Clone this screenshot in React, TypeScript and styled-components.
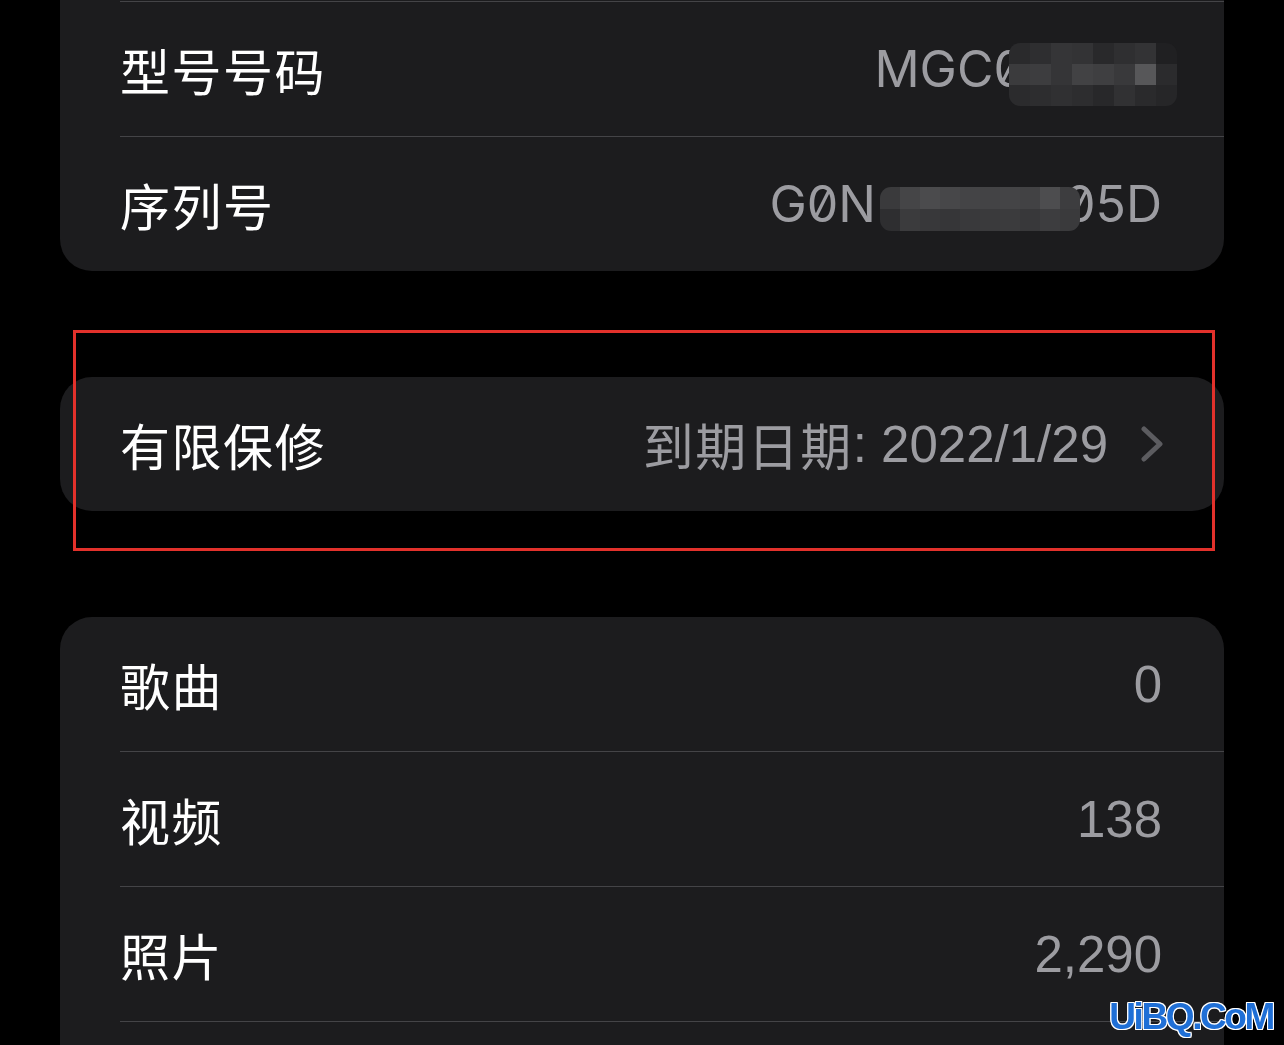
import React from "react";
import styled, { createGlobalStyle } from "styled-components";

const GlobalStyle = createGlobalStyle`
  html, body {
    margin: 0;
    padding: 0;
    background: #000;
    overflow: hidden;
  }
  body {
    font-family: "Liberation Sans", "Noto Sans CJK SC", sans-serif;
    -webkit-font-smoothing: antialiased;
  }
`;

const Page = styled.main`
  display: flex;
  flex-direction: column;
  gap: 106px;
  padding: 0 60px;
  background: #000;
`;

const Card = styled.section<{ $cutTop?: boolean; $cutBottom?: boolean }>`
  background: #1c1c1e;
  border-top-left-radius: ${(p) => (p.$cutTop ? "0" : "32px")};
  border-top-right-radius: ${(p) => (p.$cutTop ? "0" : "32px")};
  border-bottom-left-radius: ${(p) => (p.$cutBottom ? "0" : "32px")};
  border-bottom-right-radius: ${(p) => (p.$cutBottom ? "0" : "32px")};
  padding-top: ${(p) => (p.$cutTop ? "1px" : "0")};
  padding-bottom: ${(p) => (p.$cutBottom ? "30px" : "0")};
  padding-left: 60px;
`;

const Row = styled.div<{ $ruleTop?: boolean; $ruleBottom?: boolean }>`
  display: flex;
  align-items: center;
  justify-content: space-between;
  height: 134px;
  padding-right: 62px;
  border-top: ${(p) => (p.$ruleTop ? "1px solid #444447" : "none")};
  border-bottom: ${(p) => (p.$ruleBottom ? "1px solid #444447" : "none")};
`;

const Label = styled.span`
  font-family: "Noto Sans CJK SC", sans-serif;
  font-size: 50px;
  font-weight: 400;
  letter-spacing: 1.5px;
  color: #ffffff;
  white-space: nowrap;
`;

const Value = styled.span<{ $serial?: boolean }>`
  display: flex;
  align-items: center;
  font-family: ${(p) =>
    p.$serial
      ? `"Inter", "Liberation Sans", sans-serif`
      : `"Liberation Sans", "Noto Sans CJK SC", sans-serif`};
  font-variant-numeric: ${(p) => (p.$serial ? "slashed-zero" : "normal")};
  font-feature-settings: ${(p) => (p.$serial ? `"zero" 1` : "normal")};
  font-size: ${(p) => (p.$serial ? "50px" : "51px")};
  color: #9c9ca1;
  white-space: nowrap;
`;

const ValueCJK = styled.span`
  font-family: "Noto Sans CJK SC", sans-serif;
  font-size: 51px;
  letter-spacing: 1.5px;
`;

const Mosaic = styled.span<{ $cols: number; $cell: number; $rowH: number; $ml: number; $mr: number }>`
  display: grid;
  grid-template-columns: repeat(${(p) => p.$cols}, ${(p) => p.$cell}px);
  grid-auto-rows: ${(p) => p.$rowH}px;
  flex-shrink: 0;
  border-radius: 11px;
  overflow: hidden;
  margin-left: ${(p) => p.$ml}px;
  margin-right: ${(p) => p.$mr}px;
  margin-top: 10px;
  position: relative;
  z-index: 1;
`;

const Cell = styled.span<{ $c: string }>`
  background: ${(p) => p.$c};
`;

const Chevron = styled.svg`
  width: 24px;
  height: 36px;
  margin-left: 32px;
  margin-right: -2px;
  flex-shrink: 0;
`;

const Highlight = styled.div`
  position: relative;
  &::after {
    content: "";
    position: absolute;
    left: 13px;
    right: 9px;
    top: -47px;
    bottom: -40px;
    border: 3px solid #e2312b;
    pointer-events: none;
  }
`;

const Watermark = styled.div`
  position: fixed;
  right: 11px;
  bottom: 7px;
  font-family: "Liberation Sans", sans-serif;
  font-weight: 700;
  font-size: 37px;
  letter-spacing: -2.4px;
  color: #1f6fd6;
  text-shadow: 1px 0 0 #fff, -1px 0 0 #fff, 0 1px 0 #fff, 0 -1px 0 #fff,
    1px 1px 0 #fff, -1px -1px 0 #fff, 1px -1px 0 #fff, -1px 1px 0 #fff;
  z-index: 5;
`;

const mosaicModel: string[][] = [
  ["#2a2a2c", "#2e2e30", "#353537", "#333335", "#29292b", "#2f2f31", "#333335", "#202022"],
  ["#3b3b3d", "#3d3d3f", "#353537", "#424244", "#3f3f41", "#39393b", "#575759", "#2b2b2d"],
  ["#2b2b2d", "#2d2d2f", "#303032", "#2d2d2f", "#28282a", "#313133", "#2a2a2c", "#262628"],
];

const mosaicSerial: string[][] = [
  ["#3a3a3c", "#454547", "#4b4b4d", "#474749", "#444446", "#434345", "#444446", "#424244", "#4d4d4f", "#3d3d3f"],
  ["#2e2e30", "#3b3b3d", "#38383a", "#363638", "#39393b", "#3a3a3c", "#3b3b3d", "#38383a", "#3d3d3f", "#3a3a3c"],
];

function Pixelate({
  cells,
  cell,
  rowH,
  ml,
  mr,
}: {
  cells: string[][];
  cell: number;
  rowH: number;
  ml: number;
  mr: number;
}) {
  return (
    <Mosaic $cols={cells[0].length} $cell={cell} $rowH={rowH} $ml={ml} $mr={mr} aria-hidden>
      {cells.flat().map((c, i) => (
        <Cell key={i} $c={c} />
      ))}
    </Mosaic>
  );
}

export default function App() {
  return (
    <>
      <GlobalStyle />
      <Page>
        <Card $cutTop>
          <Row $ruleTop $ruleBottom>
            <Label>型号号码</Label>
            <Value $serial>
              MGC0
              <Pixelate cells={mosaicModel} cell={21} rowH={21} ml={-16} mr={-15} />
            </Value>
          </Row>
          <Row>
            <Label>序列号</Label>
            <Value $serial>
              G0N
              <Pixelate cells={mosaicSerial} cell={20} rowH={22} ml={4} mr={-16} />
              05D
            </Value>
          </Row>
        </Card>

        <Highlight>
          <Card>
            <Row>
              <Label>有限保修</Label>
              <Value>
                <ValueCJK>到期日期</ValueCJK>: 2022/1/29
                <Chevron viewBox="0 0 24 36" aria-hidden>
                  <polyline
                    points="4,3 20,18 4,33"
                    fill="none"
                    stroke="#5c5c60"
                    strokeWidth="5"
                    strokeLinecap="round"
                    strokeLinejoin="round"
                  />
                </Chevron>
              </Value>
            </Row>
          </Card>
        </Highlight>

        <Card $cutBottom>
          <Row $ruleBottom>
            <Label>歌曲</Label>
            <Value>0</Value>
          </Row>
          <Row $ruleBottom>
            <Label>视频</Label>
            <Value>138</Value>
          </Row>
          <Row $ruleBottom>
            <Label>照片</Label>
            <Value>2,290</Value>
          </Row>
        </Card>
      </Page>
      <Watermark>UiBQ.CoM</Watermark>
    </>
  );
}
